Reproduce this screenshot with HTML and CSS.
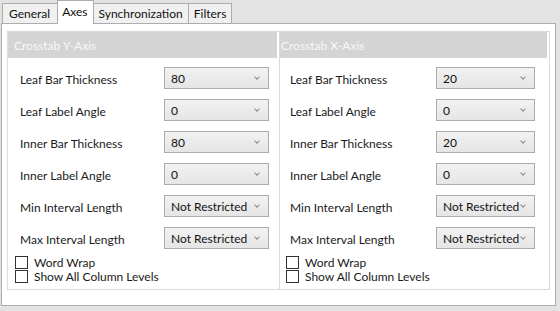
FILE: index.html
```html
<!DOCTYPE html>
<html lang="en">
<head>
  <meta charset="UTF-8">
  <title>Crosstab Axes</title>
  <link rel="stylesheet" href="styles.css">
</head>
<body>
  <div class="tabs">
    <div class="tab">General</div>
    <div class="tab active">Axes</div>
    <div class="tab">Synchronization</div>
    <div class="tab">Filters</div>
  </div>
  <div class="panel">
    <!-- Y axis -->
    <section class="group group-y">
      <div class="group-head">Crosstab Y-Axis</div>
      <div class="rows">
        <label>Leaf Bar Thickness</label><div class="combo">80</div>
        <label>Leaf Label Angle</label><div class="combo">0</div>
        <label>Inner Bar Thickness</label><div class="combo">80</div>
        <label>Inner Label Angle</label><div class="combo">0</div>
        <label>Min Interval Length</label><div class="combo">Not Restricted</div>
        <label>Max Interval Length</label><div class="combo">Not Restricted</div>
      </div>
      <div class="checks">
        <div class="check"><span class="box"></span>Word Wrap</div>
        <div class="check"><span class="box"></span>Show All Column Levels</div>
      </div>
    </section>
    <!-- X axis -->
    <section class="group group-x">
      <div class="group-head">Crosstab X-Axis</div>
      <div class="rows">
        <label>Leaf Bar Thickness</label><div class="combo">20</div>
        <label>Leaf Label Angle</label><div class="combo">0</div>
        <label>Inner Bar Thickness</label><div class="combo">20</div>
        <label>Inner Label Angle</label><div class="combo">0</div>
        <label>Min Interval Length</label><div class="combo">Not Restricted</div>
        <label>Max Interval Length</label><div class="combo">Not Restricted</div>
      </div>
      <div class="checks">
        <div class="check"><span class="box"></span>Word Wrap</div>
        <div class="check"><span class="box"></span>Show All Column Levels</div>
      </div>
    </section>
  </div>
</body>
</html>
```

FILE: styles.css
```css
body { margin: 0; padding: 0 4px 0 1px; background: #e3e3e3; color: #1a1a1a; font-family: Lato, 'Noto Sans', sans-serif; font-size: 12px; height: 311px; }
.tabs { display: flex; align-items: flex-end; height: 23px; padding-left: 1px; }
.tab { height: 19px; line-height: 20px; padding: 0 5px; background: #f0f0f0; border: 1px solid #acacac; border-bottom: none; margin-right: -1px; color: #111; }
.tab:first-child { padding: 0 7px 0 6px; }
.tab.active { height: 23px; line-height: 22px; background: #fff; margin-bottom: -1px; position: relative; z-index: 1; padding: 0 5px 0 4px; }
.panel { display: grid; grid-template-columns: 273px 270px; height: 283px; background: #fff; border: 1px solid #acacac; padding: 7px 5px 0 5px; box-sizing: border-box; align-content: start; }
.group { border: 1px solid #dadada; height: 259px; box-sizing: border-box; }
.group-x { border-left: none; }
.group-head { height: 26px; line-height: 27px; background: #d4d4d4; color: #f8f8f8; padding-left: 6px; margin-right: 2px; }
.group-x .group-head { padding-left: 1px; }
.rows { display: grid; row-gap: 10px; align-items: center; margin-top: 9px; }
.rows label { padding-top: 2px; }
.group-y .rows { grid-template-columns: 144px 105px; padding-left: 12px; }
.group-x .rows { grid-template-columns: 146px 99px; padding-left: 10px; }
.combo { height: 22px; line-height: 22px; box-sizing: border-box; border: 1px solid #acacac; background: linear-gradient(#f2f2f2, #e5e5e5); padding-left: 6px; position: relative; color: #111; }
.combo::after { content: ''; position: absolute; right: 9px; top: 7px; width: 3px; height: 3px; border-right: 1px solid #8a8a8a; border-bottom: 1px solid #8a8a8a; transform: rotate(45deg); }
.checks { margin-top: 6px; padding-left: 7px; }
.group-x .checks { padding-left: 6px; }
.check { display: flex; align-items: center; height: 14px; }
.box { width: 11px; height: 11px; border: 1px solid #333; background: #fff; margin-right: 6px; }
```
